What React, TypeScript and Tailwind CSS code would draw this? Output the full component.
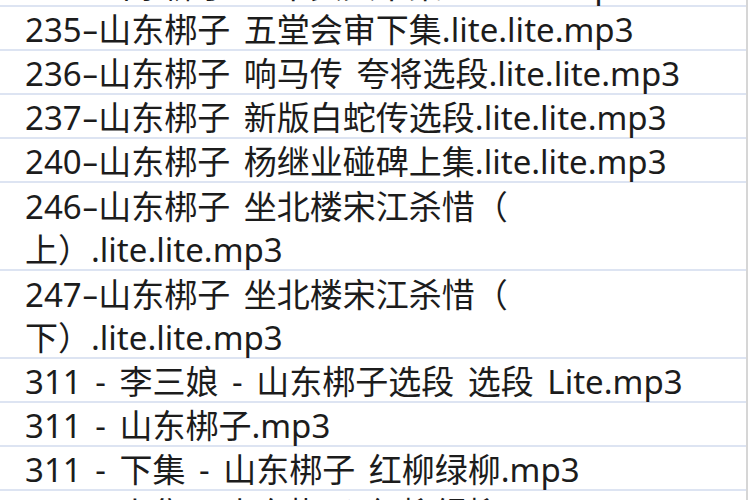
import React from 'react';

type Row = { lines: string[] };

const rows: Row[] = [
    { lines: ['234-山东梆子 王华买父下集.lite.lite.mp3'] },
    { lines: ['235-山东梆子 五堂会审下集.lite.lite.mp3'] },
    { lines: ['236-山东梆子 响马传 夸将选段.lite.lite.mp3'] },
    { lines: ['237-山东梆子 新版白蛇传选段.lite.lite.mp3'] },
    { lines: ['240-山东梆子 杨继业碰碑上集.lite.lite.mp3'] },
    { lines: ['246-山东梆子 坐北楼宋江杀惜（', '上）.lite.lite.mp3'] },
    { lines: ['247-山东梆子 坐北楼宋江杀惜（', '下）.lite.lite.mp3'] },
    { lines: ['311 - 李三娘 - 山东梆子选段 选段 Lite.mp3'] },
    { lines: ['311 - 山东梆子.mp3'] },
    { lines: ['311 - 下集 - 山东梆子 红柳绿柳.mp3'] },
    { lines: ['311 - 上集 - 山东梆子 红柳绿柳.mp3'] },
];

// "235-山东..." : the dash right after the number is drawn wider
function Line({ text }: { text: string }) {
    const m = text.match(/^(\d+)-(.*)$/);
    if (!m) return <>{text}</>;
    return (
        <>
            {m[1]}
            <span className="inline-block px-[3px] scale-x-[1.6]">-</span>
            {m[2]}
        </>
    );
}

function FileRow({ row }: { row: Row }) {
    const tall = row.lines.length > 1;
    return (
        <div
            className={
                'flex flex-col justify-end border-b-2 border-[#dde4f2] pl-[25px] ' +
                (tall ? 'h-[88px]' : 'h-[44px]')
            }
        >
            {row.lines.map((line, i) => (
                <div key={i} className="h-[43px] shrink-0 pt-[5px] leading-[38px] whitespace-nowrap">
                    <Line text={line} />
                </div>
            ))}
        </div>
    );
}

export default function App() {
    return (
        <div className="flex w-[750px] h-[500px] overflow-hidden bg-white text-[33px] text-[#1c1c1c] [word-spacing:5px] font-['Noto_Sans','Noto_Sans_CJK_SC',sans-serif]">
            <div className="w-[746px] shrink-0 -mt-[37px]">
                {rows.map((row, i) => (
                    <FileRow key={i} row={row} />
                ))}
            </div>
            <div className="w-[2px] shrink-0 bg-[#d6d6d6]" />
            <div className="flex-1 bg-white" />
        </div>
    );
}
